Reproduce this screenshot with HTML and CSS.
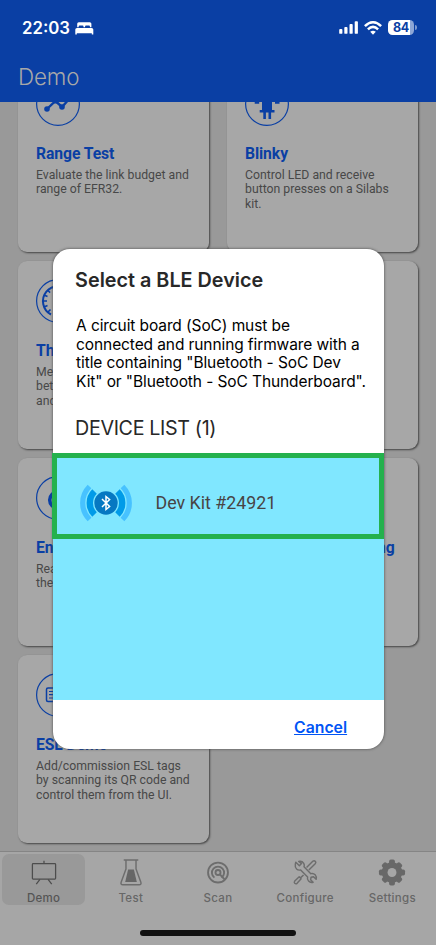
FILE: index.html
```html
<!DOCTYPE html>
<html lang="en">
<head>
<meta charset="utf-8">
<title>Demo</title>
<link rel="stylesheet" href="styles.css">
</head>
<body>
<div class="phone">
  <header class="header">
    <div class="status">
      <span class="time">22:03</span>
      <svg class="bed" width="19" height="13" viewBox="0 0 19 13"><path fill="#fff" d="M2.200 5.200V1.800Q2.200.200 3.800.200h11Q16.400.200 16.400 1.800v3.400h-1.500V4.300q0-.9-.9-.9h-3q-.9 0-.9.9v.9H8.500v-.9q0-.9-.9-.9h-3q-.9 0-.9.9v.9zM2 5.900h14.600q1.700 0 1.700 1.700V12.600h-1.500v-1.400H1.800v1.400H.3V7.600Q.3 5.900 2 5.900z"/></svg>
      <div class="signals">
        <svg width="20" height="13" viewBox="0 0 20 13" fill="#fff"><rect x=".2" y="8" width="3.200" height="4.800" rx=".9"/><rect x="5.300" y="6" width="3.200" height="6.800" rx=".9"/><rect x="10.500" y="3" width="3.200" height="9.800" rx=".9"/><rect x="15.700" y=".2" width="3.200" height="12.600" rx=".9"/></svg>
        <svg width="18" height="14" viewBox="0 0 18 14" fill="none" stroke="#fff" stroke-width="2.500"><path d="M.9 5.200Q9-2.600 17.100 5.200M3.900 8.300Q9 3.500 14.100 8.300"/><path fill="#fff" stroke="none" d="M9 13.700 6.200 10.800Q9 8.600 11.800 10.800z"/></svg>
        <span class="battery"><b>84</b></span><i class="nub"></i>
      </div>
    </div>
    <h1>Demo</h1>
  </header>

  <main class="cards">
    <section class="card">
      <svg class="icon" viewBox="0 0 44 44"><circle cx="22" cy="22" r="21.400"/><path stroke-width="2.400" d="m11 27 8.500-8 6.500 6 8-9"/><g class="solid"><circle cx="11" cy="27" r="2.800"/><circle cx="19.500" cy="19" r="2.600"/><circle cx="26" cy="25" r="2.800"/><circle cx="34" cy="16" r="2.600"/></g></svg>
      <h2>Range Test</h2><p>Evaluate the link budget and<br>range of EFR32.</p>
    </section>
    <section class="card">
      <svg class="icon" viewBox="0 0 44 44"><circle cx="22" cy="22" r="21.400"/><path class="solid" d="M17 11h10v8h7.500v2.700h-4.500V19.500H27v8.500h2.500v2.500h-3.400V37h-2.600v-6.500h-2.600V37h-2.600v-6.500h-3.600V28H17v-8.500h-2.800v2.200H9.700V19H17z"/></svg>
      <h2>Blinky</h2><p>Control LED and receive<br>button presses on a Silabs<br>kit.</p>
    </section>
    <section class="card">
      <svg class="icon" viewBox="0 0 44 44"><circle cx="22" cy="22" r="21.400"/><path stroke-width="2" d="M15 35.500A15 15 0 1 1 29 35.500"/><path stroke-width="1.600" d="M7 22h4M8 16l3.500 1.500M11.500 11l2.600 2.600M17 8l1.300 3.500M22 7v4M8 28l3.500-1.500M12 33l2.500-2.500M22 22l7-7"/></svg>
      <h2>Throughput</h2><p>Measure throughput<br>between the mobile device<br>and EFR32.</p>
    </section>
    <section class="card"></section>
    <section class="card">
      <svg class="icon" viewBox="0 0 44 44"><circle cx="22" cy="22" r="21.400"/><circle cx="22" cy="24" r="8.300" stroke-width="3.500"/></svg>
      <h2>Environment</h2><p>Read and display data from<br>the Dev Kit sensors.</p>
    </section>
    <section class="card">
      <svg class="icon" viewBox="0 0 44 44"><circle cx="22" cy="22" r="21.400"/></svg>
      <h2>Wi-Fi Commissioning</h2>
    </section>
    <section class="card">
      <svg class="icon" viewBox="0 0 44 44"><circle cx="22" cy="22" r="21.400"/><rect x="10.500" y="15" width="23" height="13.500" rx="1.500" stroke-width="1.500"/><path d="M13 18.500h6M13 21.700h6M13 25h6"/></svg>
      <h2>ESL Demo</h2><p>Add/commission ESL tags<br>by scanning its QR code and<br>control them from the UI.</p>
    </section>
  </main>

  <nav class="tabs">
    <div class="tab active">
      <svg width="28" height="30" viewBox="0 0 28 30" fill="none" stroke="#4d4d4d" stroke-width="1.300"><rect x="2" y="5.800" width="24" height="16" rx=".8"/><path d="M14 2.800v3M9.800 22l-3.800 5M18.200 22l3.800 5"/></svg>
      <span>Demo</span>
    </div>
    <div class="tab">
      <svg width="28" height="30" viewBox="0 0 28 30" fill="none" stroke="#6d6d6d" stroke-width="1.500"><path d="M6.500 2h15M8.800 2v9.500L3.800 25q-.8 2.700 1.800 2.700h16.800q2.600 0 1.800-2.700l-5-13.500V2" stroke-linejoin="round"/><path fill="#666" stroke="none" d="M11 12h6l3 12.700H8z"/></svg>
      <span>Test</span>
    </div>
    <div class="tab">
      <svg width="28" height="30" viewBox="0 0 28 30" fill="none" stroke="#6d6d6d" stroke-width="1.900"><circle cx="14" cy="15" r="10.300"/><path d="M10.300 20.300a6.300 6.300 0 1 1 7.400 0"/><circle cx="14" cy="15" r="2.600"/><path d="M15.800 16.800 20.800 22"/></svg>
      <span>Scan</span>
    </div>
    <div class="tab">
      <svg width="28" height="30" viewBox="0 0 28 30" fill="none" stroke="#6d6d6d" stroke-width="1.500" stroke-linejoin="round"><path d="M4.500 4.300 8.200 8l2.200-2.200L7.500 3.500Q11 2.700 12.700 5.500q1 1.800.3 3.500l7 7.200q2.600-.8 4.500 1.100 1.700 1.900 1 4.700l-2.700-2.600-2.500.5-.5 2.600 2.600 2.600q-2.900.7-4.700-1.200-1.800-1.800-1-4.300l-7.200-7.200q-2.500.6-4.200-1.100-1.900-2-1.300-5zM15.600 9.800l6.700-6.600q1.200-.6 2.400.2 1 .9.100 2.200L18 12.400M12.500 17.500l-3.500 3.300M8 19.400l2 2-4.200 4.800q-1.300 1-2.400 0-1-1.200 0-2.400z"/></svg>
      <span>Configure</span>
    </div>
    <div class="tab">
      <svg width="28" height="30" viewBox="0 0 28 30"><g transform="translate(14 15)"><g fill="#686868"><rect x="-3" y="-13.500" width="6" height="27" rx="1.800"/><rect x="-3" y="-13" width="6" height="26" rx="1.800" transform="rotate(45)"/><rect x="-3" y="-13.500" width="6" height="27" rx="1.800" transform="rotate(90)"/><rect x="-3" y="-13" width="6" height="26" rx="1.800" transform="rotate(135)"/><circle r="10.600"/></g><circle r="4.600" fill="#a6a6a6"/></g></svg>
      <span>Settings</span>
    </div>
    <i class="home"></i>
  </nav>

  <div class="modal">
    <h2>Select a BLE Device</h2>
    <p class="message">A circuit board (SoC) must be<br>connected and running firmware with a<br>title containing "Bluetooth - SoC Dev<br>Kit" or "Bluetooth - SoC Thunderboard".</p>
    <h3>DEVICE LIST (1)</h3>
    <div class="list">
      <div class="device">
        <svg width="54" height="38" viewBox="0 0 54 38"><g fill="none"><path stroke="#47c2ff" stroke-width="5.200" d="M10.520 2.520a23.300 23.300 0 0 0 0 32.960M43.480 2.520a23.300 23.300 0 0 1 0 32.960"/><path stroke="#009be8" stroke-width="6.400" d="M15.540 7.540a16.200 16.200 0 0 0 0 22.920M38.460 7.540a16.200 16.200 0 0 1 0 22.920"/></g><circle cx="27" cy="19" r="11.700" fill="#0678c2"/><path fill="none" stroke="#fff" stroke-width="1.500" d="m23 15 7.600 7.500L27 25.500v-13l3.600 3L23 23"/></svg>
        <span>Dev Kit #24921</span>
      </div>
    </div>
    <div class="actions"><a>Cancel</a></div>
  </div>
</div>
</body>
</html>
```
FILE: styles.css
```css
* { box-sizing: border-box; }
body { margin: 0; }
h1, h2, h3, p { margin: 0; white-space: nowrap; }
.phone {
  position: relative;
  width: 436px;
  height: 945px;
  overflow: hidden;
  display: flex;
  flex-direction: column;
  background: #999;
  font-family: Inter, "Liberation Sans", sans-serif;
}
.header {
  position: relative;
  z-index: 1;
  flex: none;
  height: 102px;
  padding: 17px 21px 0 22px;
  background: #0a3fa4;
}
.status { display: flex; align-items: center; height: 22px; color: #fff; }
.time { font-size: 16.8px; font-weight: 600; line-height: 22px; }
.bed { margin-left: 5px; }
.signals { display: flex; align-items: center; margin: -1px 0 0 auto; }
.signals svg:first-child { margin-left: -1px; }
.signals svg + svg { margin: 0 6px 0 5px; }
.battery {
  width: 26px;
  height: 15px;
  border-radius: 4.5px;
  background: linear-gradient(90deg, #fff 22px, #8da6d6 22px);
  color: #0a3fa4;
  font-size: 12.5px;
  line-height: 15px;
  text-align: center;
}
.battery b { display: block; letter-spacing: -.2px; }
.nub { width: 2px; height: 5px; margin: 0 -2px 0 1px; border-radius: 0 2px 2px 0; background: #7f9bd0; }
.header h1 {
  margin: 23px 0 0 -4px;
  color: #a8a8a8;
  font-size: 22.4px;
  font-weight: 350;
  line-height: 30px;
  letter-spacing: -.15px;
}
.cards {
  flex: none;
  height: 787px;
  margin-top: -38px;
  padding: 0 18px;
  display: grid;
  grid-template-columns: 191px 191px;
  grid-auto-rows: 188px;
  justify-content: space-between;
  gap: 9px;
}
.card {
  padding: 18px;
  border-radius: 9px;
  background: #a7a7a7;
  box-shadow: 1px 1px 2px #444;
  font-family: Roboto, sans-serif;
}
.icon {
  display: block;
  width: 44px;
  height: 44px;
  fill: none;
  stroke: #0a3fa4;
  stroke-width: 1.2;
}
.icon .solid { fill: #0a3fa4; stroke: none; }
.card h2 {
  margin-top: 18px;
  color: #0a3fa4;
  font-size: 15.7px;
  font-weight: 700;
  line-height: 20px;
  letter-spacing: -.07px;
}
.card p {
  margin-top: 4px;
  color: #484848;
  font-size: 12.25px;
  line-height: 14.3px;
}
.tabs {
  position: relative;
  flex: 1;
  display: flex;
  align-items: flex-start;
  padding-top: 2px;
  border-top: 1px solid #858585;
  background: #a6a6a6;
}
.tab {
  width: 83.2px;
  height: 51px;
  margin: 0 2px;
  padding-top: 4px;
  display: flex;
  flex-direction: column;
  align-items: center;
  color: #676767;
  font-size: 11.5px;
  font-weight: 500;
  letter-spacing: .3px;
}
.tab span { margin-top: 4px; line-height: 14px; }
.tab.active { color: #555; background: #999; border-radius: 7px; }
.home {
  position: absolute;
  left: 140px;
  bottom: 9px;
  width: 156px;
  height: 6px;
  border-radius: 3px;
  background: #111;
}
.modal {
  position: absolute;
  z-index: 2;
  left: 52.6px;
  top: 248.6px;
  width: 331px;
  height: 500.4px;
  border-radius: 17px;
  display: flex;
  flex-direction: column;
  background: #fff;
  box-shadow: 0 0 3px #444;
}
.modal h2 { margin: 18px 0 0 22.5px; color: #282828; font-size: 19.8px; font-weight: 600; line-height: 26px; }
.message { margin: 24.3px 0 0 23.5px; color: #000; font-size: 15.5px; line-height: 18.7px; letter-spacing: -.1px; }
.modal h3 { margin: 22.1px 0 0 22.5px; color: #282828; font-size: 19.7px; font-weight: 400; line-height: 28px; letter-spacing: -.35px; }
.list { height: 247px; margin-top: auto; background: #80e7ff; }
.device {
  height: 86px;
  margin-left: -1px;
  padding: 14.5px 0 0 22.5px;
  border: 5px solid #24b14d;
  display: flex;
  align-items: center;
  color: #484444;
  font: 17.8px/24px Roboto, sans-serif;
}
.device span { margin-left: 22.5px; }
.actions { height: 49px; padding: 17px 36.5px; text-align: right; }
.actions a {
  color: #0054f5;
  font-size: 15.8px;
  font-weight: 600;
  line-height: 22px;
  text-decoration: underline;
  text-decoration-thickness: 1.3px;
}
```
